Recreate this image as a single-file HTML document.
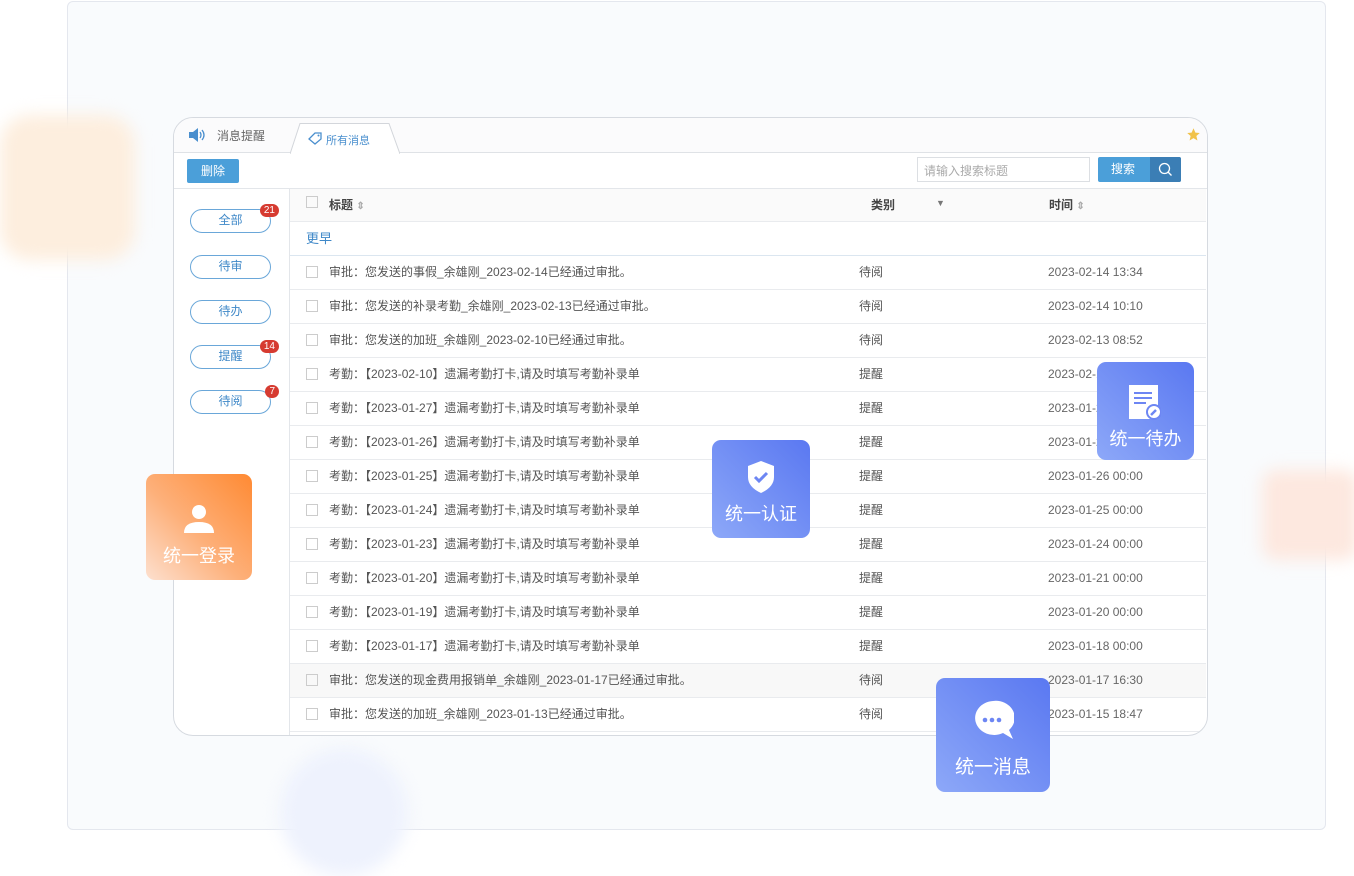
<!DOCTYPE html>
<html><head><meta charset="utf-8"><style>
*{margin:0;padding:0;box-sizing:border-box}
body{width:1354px;height:876px;background:#fff;position:relative;overflow:hidden;font-family:"Liberation Sans","Noto Sans CJK SC",sans-serif;color:#555}
.outer{position:absolute;left:67px;top:1px;width:1259px;height:829px;background:#f9fbfd;border:1px solid #e4e7ee;border-radius:6px}
.blob{position:absolute;filter:blur(8px)}
.panel{position:absolute;left:173px;top:117px;width:1035px;height:619px;background:#fff;border:1.5px solid #d6dae0;border-radius:20px;overflow:hidden}
.tabbar{position:absolute;left:0;top:0;width:100%;height:35px;border-bottom:1px solid #dfe2e6;background:#fbfbfc}
.t1{position:absolute;left:43px;top:9px;font-size:12px;color:#666}
.tab2{position:absolute;left:116px;top:5px;width:110px;height:31px}
.tab2 span{position:absolute;left:36px;top:9px;font-size:11px;color:#4a8fce}
.tool{position:absolute;top:35px;left:0;width:100%;height:36px;border-bottom:1px solid #e3e6ea}
.del{position:absolute;left:13px;top:6px;width:52px;height:24px;background:#4b9fd9;color:#fff;font-size:12px;text-align:center;line-height:24px;border-radius:2px}
.search{position:absolute;left:743px;top:4px;width:173px;height:25px;border:1px solid #dcdfe3;font-size:12px;color:#aaa;padding:4px 6px}
.sbtn{position:absolute;left:924px;top:4px;width:83px;height:25px;background:#4b9fd9;border-radius:2px;color:#fff;font-size:12px;line-height:25px;padding-left:13px}
.sbtn i{position:absolute;right:0;top:0;width:31px;height:25px;background:#3b7eb5;border-radius:0 2px 2px 0}
.side{position:absolute;left:0;top:71px;width:116px;height:560px;border-right:1px solid #e3e6ea}
.pill{position:absolute;left:16px;width:81px;height:24px;border:1.5px solid #6aa7d9;border-radius:12px;font-size:12px;color:#3f88c8;text-align:center;line-height:21px}
.badge{position:absolute;right:-9px;top:-6px;background:#d63b31;color:#fff;font-size:10px;border-radius:7px;padding:0 4px;line-height:13px}
.row{position:absolute;left:116px;width:916px;height:34px;border-bottom:1.5px solid #e9ebee;font-size:12px;color:#555}
.row .cb{position:absolute;left:16px;top:10px;width:12px;height:12px;border:1px solid #ccc}
.row .a{position:absolute;left:39px;top:7px}
.row .b{position:absolute;left:569px;top:7px}
.row .c{position:absolute;left:758px;top:9px;color:#666}
.fc{position:absolute;border-radius:9px;color:#fff;text-align:center;font-size:18px}
.fc svg{display:block;margin:0 auto}
</style></head><body>
<div class="outer"></div>
<div class="blob" style="left:0;top:115px;width:135px;height:145px;background:#fdeede;border-radius:30px"></div>
<div class="blob" style="left:1262px;top:470px;width:96px;height:90px;background:#fde8df;border-radius:14px"></div>
<div class="blob" style="left:280px;top:748px;width:128px;height:128px;background:#eef2fd;border-radius:50%"></div>
<div class="panel">
 <div class="tabbar">
  <svg style="position:absolute;left:14px;top:10px" width="18" height="14" viewBox="0 0 18 14"><path d="M1 4h4l5-4v14l-5-4H1z" fill="#4a8fce"/><path d="M12 4q2 3 0 6M14 2q4 5 0 10" stroke="#4a8fce" fill="none" stroke-width="1.3"/></svg>
  <span class="t1">消息提醒</span>
  <div class="tab2"><svg style="position:absolute;left:0;top:0" width="110" height="31"><path d="M0 31L10 .5H99L110 31" fill="#fff" stroke="#d3d6db"/></svg><svg style="position:absolute;left:18px;top:9px" width="14" height="13" viewBox="0 0 14 13"><path d="M7 1h6v6l-6 5-6-5z" fill="none" stroke="#4a8fce" stroke-width="1.3"/><circle cx="10.5" cy="3.5" r="1" fill="#4a8fce"/></svg><span>所有消息</span></div>
  <svg style="position:absolute;right:6px;top:9px" width="15" height="15" viewBox="0 0 24 24"><path d="M12 2l3 7 7 .6-5.4 4.7 1.7 7.2L12 17.8 5.7 21.5l1.7-7.2L2 9.6 9 9z" fill="#f1c24a"/></svg>
 </div>
 <div class="tool"><div class="del">删除</div><div class="search">请输入搜索标题</div><div class="sbtn">搜索<i><svg style="position:absolute;left:8px;top:5px" width="15" height="15" viewBox="0 0 15 15"><circle cx="6.5" cy="6.5" r="5" stroke="#fff" fill="none" stroke-width="1.3"/><path d="M10 10l3.5 3.5" stroke="#fff" stroke-width="1.3"/></svg></i></div></div>
 <div class="side">
  <div class="pill" style="top:20px">全部<span class="badge">21</span></div>
  <div class="pill" style="top:66px">待审</div>
  <div class="pill" style="top:111px">待办</div>
  <div class="pill" style="top:156px">提醒<span class="badge">14</span></div>
  <div class="pill" style="top:201px">待阅<span class="badge">7</span></div>
 </div>
 <div class="row" style="top:71px;height:33px;background:#fafafa;font-weight:bold;color:#444"><span class="cb" style="top:7px"></span><span class="a" style="top:7px">标题 <span style="color:#aaa;font-size:10px">⇕</span></span><span class="b" style="left:581px;top:7px">类别</span><span style="position:absolute;left:646px;top:9px;color:#777;font-size:9px">▼</span><span class="c" style="left:759px;top:7px;color:#444">时间 <span style="color:#aaa;font-size:10px">⇕</span></span></div>
 <div class="row" style="top:104px;border-bottom-color:#dbe6f0"><span class="a" style="left:16px;top:6px;color:#3f88c8;font-size:13px">更早</span></div>
 <div class="row" style="top:138px"><span class="cb"></span><span class="a">审批：您发送的事假_余雄刚_2023-02-14已经通过审批。</span><span class="b">待阅</span><span class="c">2023-02-14 13:34</span></div>
 <div class="row" style="top:172px"><span class="cb"></span><span class="a">审批：您发送的补录考勤_余雄刚_2023-02-13已经通过审批。</span><span class="b">待阅</span><span class="c">2023-02-14 10:10</span></div>
 <div class="row" style="top:206px"><span class="cb"></span><span class="a">审批：您发送的加班_余雄刚_2023-02-10已经通过审批。</span><span class="b">待阅</span><span class="c">2023-02-13 08:52</span></div>
 <div class="row" style="top:240px"><span class="cb"></span><span class="a">考勤：【2023-02-10】遗漏考勤打卡,请及时填写考勤补录单</span><span class="b">提醒</span><span class="c">2023-02-11 00:00</span></div>
 <div class="row" style="top:274px"><span class="cb"></span><span class="a">考勤：【2023-01-27】遗漏考勤打卡,请及时填写考勤补录单</span><span class="b">提醒</span><span class="c">2023-01-28 00:00</span></div>
 <div class="row" style="top:308px"><span class="cb"></span><span class="a">考勤：【2023-01-26】遗漏考勤打卡,请及时填写考勤补录单</span><span class="b">提醒</span><span class="c">2023-01-27 00:00</span></div>
 <div class="row" style="top:342px"><span class="cb"></span><span class="a">考勤：【2023-01-25】遗漏考勤打卡,请及时填写考勤补录单</span><span class="b">提醒</span><span class="c">2023-01-26 00:00</span></div>
 <div class="row" style="top:376px"><span class="cb"></span><span class="a">考勤：【2023-01-24】遗漏考勤打卡,请及时填写考勤补录单</span><span class="b">提醒</span><span class="c">2023-01-25 00:00</span></div>
 <div class="row" style="top:410px"><span class="cb"></span><span class="a">考勤：【2023-01-23】遗漏考勤打卡,请及时填写考勤补录单</span><span class="b">提醒</span><span class="c">2023-01-24 00:00</span></div>
 <div class="row" style="top:444px"><span class="cb"></span><span class="a">考勤：【2023-01-20】遗漏考勤打卡,请及时填写考勤补录单</span><span class="b">提醒</span><span class="c">2023-01-21 00:00</span></div>
 <div class="row" style="top:478px"><span class="cb"></span><span class="a">考勤：【2023-01-19】遗漏考勤打卡,请及时填写考勤补录单</span><span class="b">提醒</span><span class="c">2023-01-20 00:00</span></div>
 <div class="row" style="top:512px"><span class="cb"></span><span class="a">考勤：【2023-01-17】遗漏考勤打卡,请及时填写考勤补录单</span><span class="b">提醒</span><span class="c">2023-01-18 00:00</span></div>
 <div class="row" style="top:546px;background:#f8f8f8"><span class="cb"></span><span class="a">审批：您发送的现金费用报销单_余雄刚_2023-01-17已经通过审批。</span><span class="b">待阅</span><span class="c">2023-01-17 16:30</span></div>
 <div class="row" style="top:580px"><span class="cb"></span><span class="a">审批：您发送的加班_余雄刚_2023-01-13已经通过审批。</span><span class="b">待阅</span><span class="c">2023-01-15 18:47</span></div>
</div>
<div class="fc" style="left:146px;top:474px;width:106px;height:106px;background:linear-gradient(225deg,#ff8a33 0%,#fdb07a 55%,#fde0cf 100%)">
 <svg style="margin-top:28px" width="32" height="32" viewBox="0 0 32 32"><circle cx="16" cy="10" r="7" fill="#fff"/><path d="M1 31q0-11 15-11t15 11z" fill="#fff"/></svg>
 <div style="margin-top:8px">统一登录</div></div>
<div class="fc" style="left:712px;top:440px;width:98px;height:98px;background:linear-gradient(225deg,#5a78f1,#8da8f8)">
 <svg style="margin-top:20px" width="30" height="34" viewBox="0 0 30 34"><path d="M15 1L28 6v11q0 10-13 16Q2 27 2 17V6z" fill="#fff"/><path d="M9 17l4 4 8-8" stroke="#6d86f3" stroke-width="3" fill="none"/></svg>
 <div style="margin-top:6px">统一认证</div></div>
<div class="fc" style="left:1097px;top:362px;width:97px;height:98px;background:linear-gradient(225deg,#5a78f1,#8da8f8)">
 <svg style="margin-top:23px;margin-left:32px" width="32" height="36" viewBox="0 0 32 36"><rect x="0" y="0" width="29" height="34" fill="#fff"/><path d="M5 8h18M5 13h18M5 18h12" stroke="#6d86f3" stroke-width="2"/><circle cx="25" cy="27" r="7" fill="#fff" stroke="#6d86f3" stroke-width="2"/><path d="M22 30l5-5" stroke="#6d86f3" stroke-width="2.5"/></svg>
 <div style="margin-top:4px">统一待办</div></div>
<div class="fc" style="left:936px;top:678px;width:114px;height:114px;background:linear-gradient(225deg,#5a78f1,#8da8f8)">
 <svg style="margin-top:22px" width="42" height="40" viewBox="0 0 42 40"><path d="M21 1a19 17 0 1 0 10 32l10 6-4-9A19 17 0 0 0 21 1z" fill="#fff"/><circle cx="13" cy="20" r="2.3" fill="#6d86f3"/><circle cx="20" cy="20" r="2.3" fill="#6d86f3"/><circle cx="27" cy="20" r="2.3" fill="#6d86f3"/></svg>
 <div style="margin-top:12px;font-size:19px">统一消息</div></div>
</body></html>
